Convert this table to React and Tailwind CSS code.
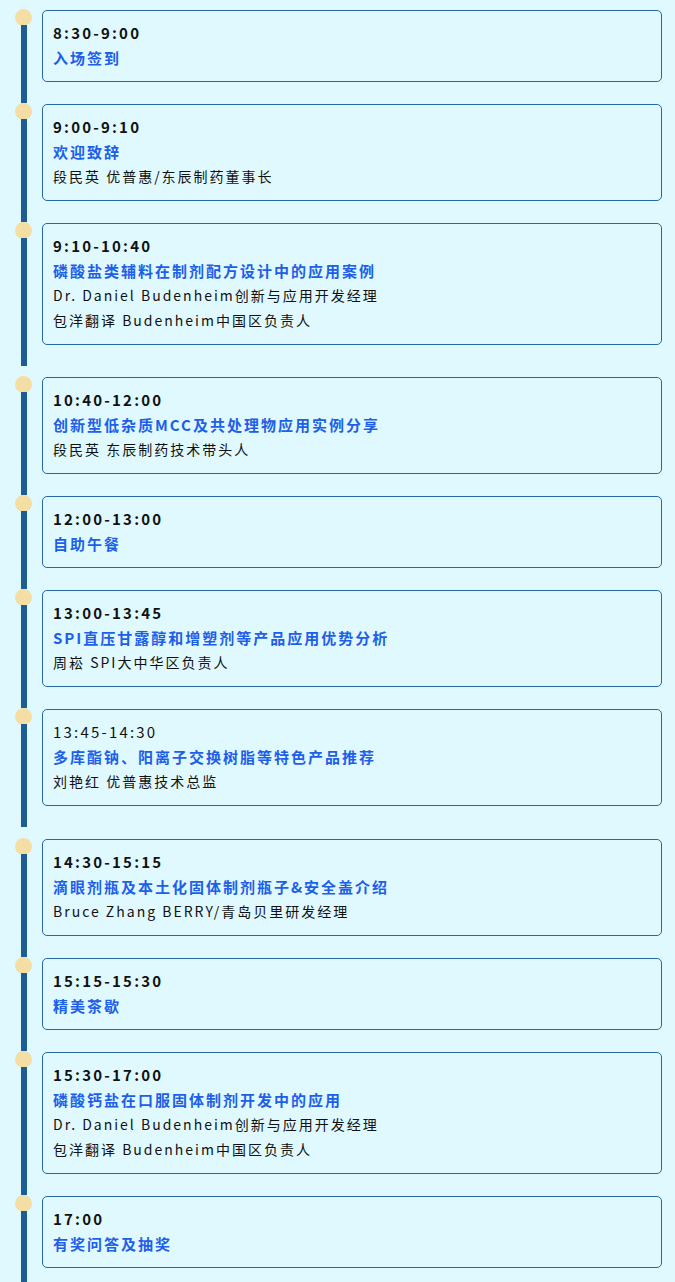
import React from "react";

const sections = [
    [
        { time: "8:30-9:00", title: "入场签到", lines: [] },
        { time: "9:00-9:10", title: "欢迎致辞", lines: ["段民英 优普惠/东辰制药董事长"] },
        {
            time: "9:10-10:40",
            title: "磷酸盐类辅料在制剂配方设计中的应用案例",
            lines: ["Dr. Daniel Budenheim创新与应用开发经理", "包洋翻译 Budenheim中国区负责人"]
        }
    ],
    [
        { time: "10:40-12:00", title: "创新型低杂质MCC及共处理物应用实例分享", lines: ["段民英 东辰制药技术带头人"] },
        { time: "12:00-13:00", title: "自助午餐", lines: [] },
        { time: "13:00-13:45", title: "SPI直压甘露醇和增塑剂等产品应用优势分析", lines: ["周崧 SPI大中华区负责人"] },
        { time: "13:45-14:30", title: "多库酯钠、阳离子交换树脂等特色产品推荐", lines: ["刘艳红 优普惠技术总监"], light: true }
    ],
    [
        { time: "14:30-15:15", title: "滴眼剂瓶及本土化固体制剂瓶子&安全盖介绍", lines: ["Bruce Zhang BERRY/青岛贝里研发经理"] },
        { time: "15:15-15:30", title: "精美茶歇", lines: [] },
        {
            time: "15:30-17:00",
            title: "磷酸钙盐在口服固体制剂开发中的应用",
            lines: ["Dr. Daniel Budenheim创新与应用开发经理", "包洋翻译 Budenheim中国区负责人"]
        },
        { time: "17:00", title: "有奖问答及抽奖", lines: [] }
    ]
];

const font = { fontFamily: '"Noto Sans CJK SC", "Noto Sans", sans-serif' };

function Item({ item }) {
    return (
        <div className="flex items-stretch">
            <div className="w-[42px] shrink-0 flex">
                <div className="ml-[15px] w-[17px] flex flex-col items-center">
                    <div className="w-[17px] h-[17px] rounded-full bg-[#f4dea3] shrink-0" />
                    <div className="w-[6px] flex-1 bg-[#1e5d92] -mt-[1px]" />
                </div>
            </div>
            <div className="flex-1 pt-[1px] pb-[21px]">
                <div className="border border-[#2768a3] rounded-[5px] pl-[10px] pr-3 pt-[9px] pb-[11px] leading-[25px]">
                    <div className={`text-[15px] tracking-[2.2px] text-[#111] ${item.light ? "font-normal" : "font-bold"}`}>
                        {item.time}
                    </div>
                    <div className="text-[15px] tracking-[2px] font-bold text-[#1d5fe8]">{item.title}</div>
                    {item.lines.map((line, i) => (
                        <div key={i} className="text-[14px] tracking-[2px] text-[#111]">{line}</div>
                    ))}
                </div>
            </div>
        </div>
    );
}

export default function App() {
    return (
        <div className="bg-[#e0f9ff] w-[675px] h-[1282px] overflow-hidden pt-[9px] pr-[13px]" style={font}>
            {sections.map((section, s) => (
                <div key={s} className={s === 1 ? "mb-[11px]" : "mb-[10px]"}>
                    {section.map((item, i) => (
                        <Item key={i} item={item} />
                    ))}
                </div>
            ))}
        </div>
    );
}
